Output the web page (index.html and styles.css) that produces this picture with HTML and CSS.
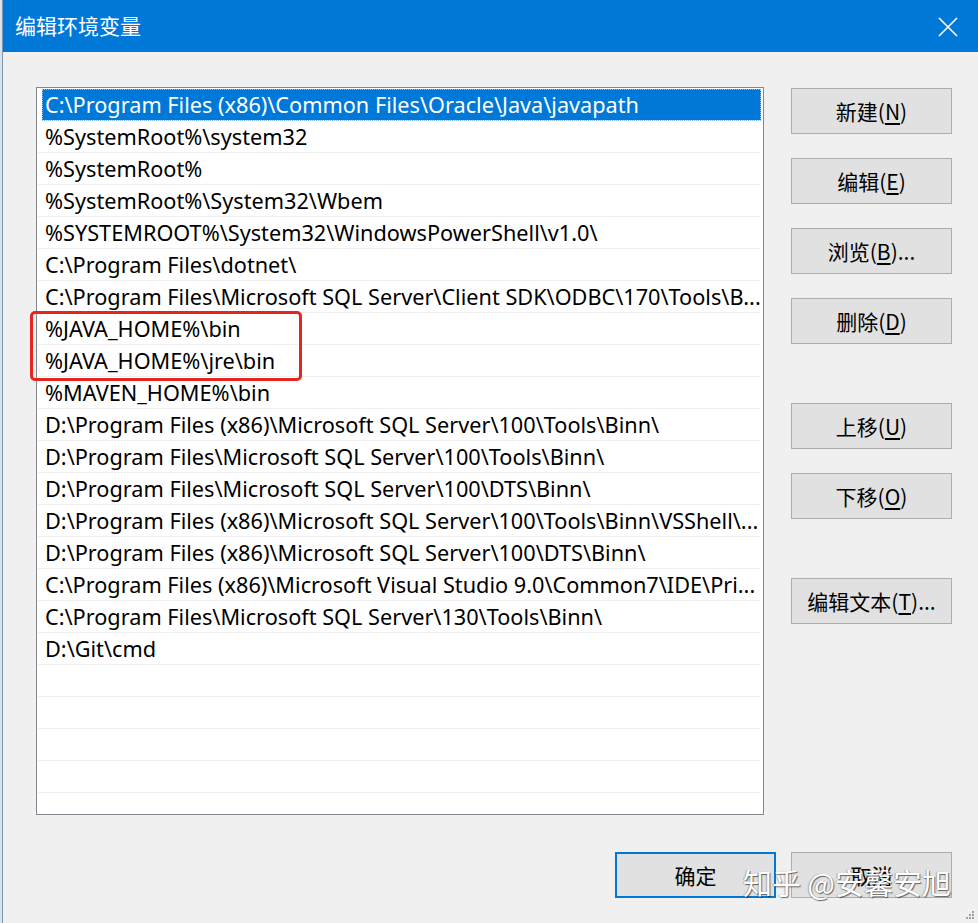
FILE: index.html
```html
<!DOCTYPE html>
<html lang="zh-CN">
<head>
<meta charset="utf-8">
<title>编辑环境变量</title>
<link rel="stylesheet" href="styles.css">
</head>
<body>
<div class="screen">
  <div class="bgstrip"></div>
  <div class="dialog">
    <div class="titlebar">
      <span class="title">编辑环境变量</span>
      <svg class="close" width="20" height="20" viewBox="0 0 20 20" aria-hidden="true">
        <path d="M1 1 L19 19 M19 1 L1 19" stroke="#ffffff" stroke-width="1.6" fill="none"/>
      </svg>
    </div>
    <div class="body">
      <div class="main">
        <div class="list">
          <div class="row sel">C:\Program Files (x86)\Common Files\Oracle\Java\javapath</div>
          <div class="row">%SystemRoot%\system32</div>
          <div class="row">%SystemRoot%</div>
          <div class="row">%SystemRoot%\System32\Wbem</div>
          <div class="row">%SYSTEMROOT%\System32\WindowsPowerShell\v1.0\</div>
          <div class="row">C:\Program Files\dotnet\</div>
          <div class="row">C:\Program Files\Microsoft SQL Server\Client SDK\ODBC\170\Tools\B...</div>
          <div class="row">%JAVA_HOME%\bin</div>
          <div class="row">%JAVA_HOME%\jre\bin</div>
          <div class="row">%MAVEN_HOME%\bin</div>
          <div class="row">D:\Program Files (x86)\Microsoft SQL Server\100\Tools\Binn\</div>
          <div class="row">D:\Program Files\Microsoft SQL Server\100\Tools\Binn\</div>
          <div class="row">D:\Program Files\Microsoft SQL Server\100\DTS\Binn\</div>
          <div class="row">D:\Program Files (x86)\Microsoft SQL Server\100\Tools\Binn\VSShell\...</div>
          <div class="row">D:\Program Files (x86)\Microsoft SQL Server\100\DTS\Binn\</div>
          <div class="row">C:\Program Files (x86)\Microsoft Visual Studio 9.0\Common7\IDE\Pri...</div>
          <div class="row">C:\Program Files\Microsoft SQL Server\130\Tools\Binn\</div>
          <div class="row">D:\Git\cmd</div>
          <div class="row"></div>
          <div class="row"></div>
          <div class="row"></div>
          <div class="row"></div>
          <div class="row"></div>
        </div>
        <div class="side">
          <div class="group">
            <button class="btn">新建(<u>N</u>)</button>
            <button class="btn">编辑(<u>E</u>)</button>
            <button class="btn">浏览(<u>B</u>)...</button>
            <button class="btn">删除(<u>D</u>)</button>
          </div>
          <div class="group">
            <button class="btn">上移(<u>U</u>)</button>
            <button class="btn">下移(<u>O</u>)</button>
          </div>
          <div class="group">
            <button class="btn">编辑文本(<u>T</u>)...</button>
          </div>
        </div>
      </div>
      <div class="footer">
        <button class="btn default">确定</button>
        <button class="btn">取消</button>
      </div>
    </div>
  </div>
</div>
<div class="mark"></div>
<div class="watermark">知乎 @安馨安旭</div>
<svg class="grip" width="10" height="10" viewBox="0 0 10 10" aria-hidden="true">
  <rect x="7" y="1" width="2" height="2" fill="#a0a0a0"/>
  <rect x="4" y="4" width="2" height="2" fill="#a0a0a0"/>
  <rect x="7" y="4" width="2" height="2" fill="#a0a0a0"/>
  <rect x="1" y="7" width="2" height="2" fill="#a0a0a0"/>
  <rect x="4" y="7" width="2" height="2" fill="#a0a0a0"/>
  <rect x="7" y="7" width="2" height="2" fill="#a0a0a0"/>
</svg>
</body>
</html>
```

FILE: styles.css
```css
html, body {
  margin: 0;
  padding: 0;
}
body {
  width: 978px;
  height: 923px;
  overflow: hidden;
  background: #f0f0f0;
  font-family: "Noto Sans", "Noto Sans CJK SC", sans-serif;
  color: #000;
  position: relative;
}
.screen {
  display: flex;
  height: 923px;
}
.bgstrip {
  width: 2px;
  background: #d9e3ee;
  border-right: 1px solid #7f93ad;
  flex: none;
}
.dialog {
  flex: 1;
  display: flex;
  flex-direction: column;
  background: #f0f0f0;
}
.titlebar {
  height: 52px;
  background: #0078d7;
  display: flex;
  align-items: center;
  justify-content: space-between;
  padding: 0 20px 0 12px;
  flex: none;
}
.title {
  color: #fff;
  font-family: "Noto Sans CJK SC", sans-serif;
  font-size: 21px;
  line-height: 1;
  padding-bottom: 1px;
}
.close {
  display: block;
  margin-top: 1px;
}
.body {
  display: flex;
  flex-direction: column;
  padding: 35px 26px 0 33px;
}
.main {
  display: flex;
  align-items: flex-start;
}
.list {
  width: 724px;
  height: 725px;
  border: 1px solid #828790;
  background: #fff;
  overflow: hidden;
  padding: 1px 1px 0 1px;
  box-sizing: content-box;
  flex: none;
}
.row {
  height: 31px;
  border-bottom: 1px solid #f0f0f0;
  line-height: 31px;
  padding-left: 7px;
  font-size: 21.7px;
  white-space: nowrap;
  overflow: hidden;
  margin-right: 1px;
}
.row.sel {
  background: #0078d7;
  color: #fff;
  margin-left: 4px;
  padding-left: 3px;
  outline: 1px dotted #8cc0ee;
  outline-offset: -1px;
}
.side {
  margin-left: 27px;
  margin-top: 1px;
  display: flex;
  flex-direction: column;
  gap: 59px;
}
.group {
  display: flex;
  flex-direction: column;
  gap: 24px;
}
.btn {
  width: 161px;
  height: 46px;
  background: #e1e1e1;
  border: 1px solid #adadad;
  font-family: "Noto Sans CJK SC", sans-serif;
  font-size: 21px;
  color: #000;
  padding: 0;
  margin: 0;
  line-height: 1;
}
.btn u {
  text-underline-offset: 3px;
}
.footer {
  display: flex;
  justify-content: flex-end;
  gap: 15px;
  margin-top: 37px;
}
.btn.default {
  border: 2px solid #0078d7;
}
.mark {
  position: absolute;
  left: 30px;
  top: 311px;
  width: 266px;
  height: 64px;
  border: 3.5px solid #e52520;
  border-radius: 5px;
}
.watermark {
  position: absolute;
  left: 743px;
  top: 862px;
  font-family: "Noto Sans CJK SC", sans-serif;
  font-size: 29px;
  line-height: 40px;
  color: #fff;
  white-space: nowrap;
  text-shadow: 1px 1px 1px rgba(0,0,0,0.55), -1px 0 1px rgba(0,0,0,0.25);
}
.grip {
  position: absolute;
  right: 3px;
  bottom: 3px;
}
```
